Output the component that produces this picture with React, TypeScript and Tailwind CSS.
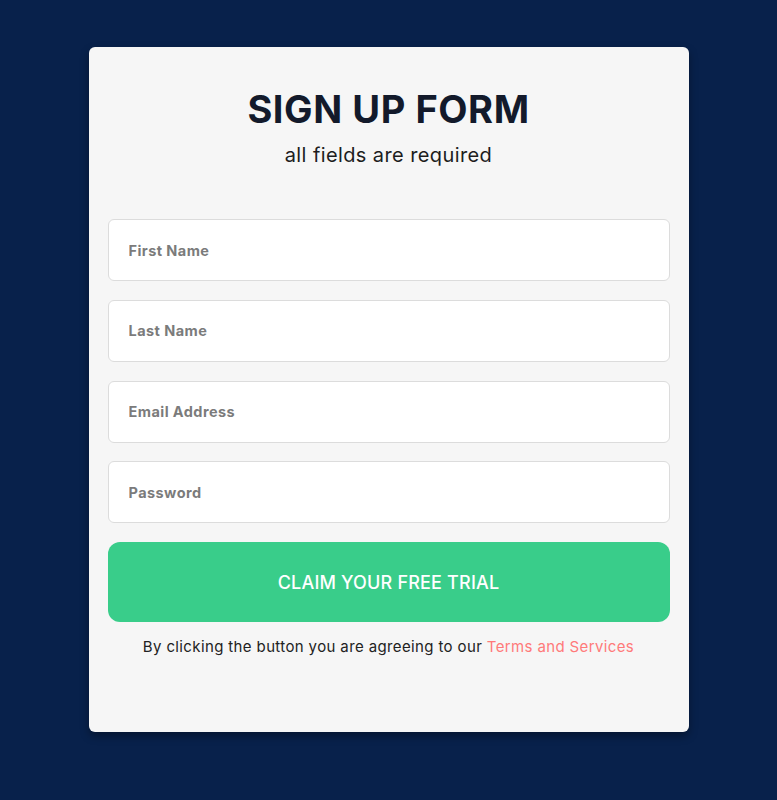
const fields = ['First Name', 'Last Name', 'Email Address', 'Password'];

export default function App() {
    return (
        <div
            className="min-h-[800px] w-full bg-[#08214b] pt-[47px]"
            style={{ fontFamily: 'Inter, "Open Sans", sans-serif' }}
        >
            <div className="mx-auto flex h-[685px] w-[600px] flex-col rounded-md bg-[#f6f6f6] px-[19px] pt-[40px] shadow-[0_4px_8px_rgba(0,0,0,0.35)]">
                {/* Header */}
                <h1 className="text-center text-[38px] font-bold leading-[44px] tracking-[0.015em] text-[#131a2b]">
                    SIGN UP FORM
                </h1>
                <p className="mt-[11px] text-center text-[20px] leading-[26px] tracking-[0.02em] text-[#1d1d1d]">
                    all fields are required
                </p>

                {/* Inputs */}
                <form className="mt-[51px] flex flex-col gap-[18.75px]" onSubmit={(e) => e.preventDefault()}>
                    {fields.map((f) => (
                        <input
                            key={f}
                            type={f === 'Password' ? 'password' : 'text'}
                            placeholder={f}
                            className="h-[62px] w-full rounded-md border border-[#dcdcdc] bg-white px-[20px] text-[14.5px] font-bold tracking-[0.03em] text-[#333] placeholder:text-[#7b7b7b] focus:outline-none"
                        />
                    ))}
                    <button
                        type="submit"
                        className="h-[80px] w-full rounded-xl bg-[#39cd8a] text-[18px] font-medium uppercase tracking-[0.01em] text-white"
                    >
                        Claim your free trial
                    </button>
                </form>

                <p className="mt-[14px] text-center text-[15px] tracking-[0.025em] text-[#222]">
                    By clicking the button you are agreeing to our{' '}
                    <a href="#" className="text-[#ff7a7a]">
                        Terms and Services
                    </a>
                </p>
            </div>
        </div>
    );
}
